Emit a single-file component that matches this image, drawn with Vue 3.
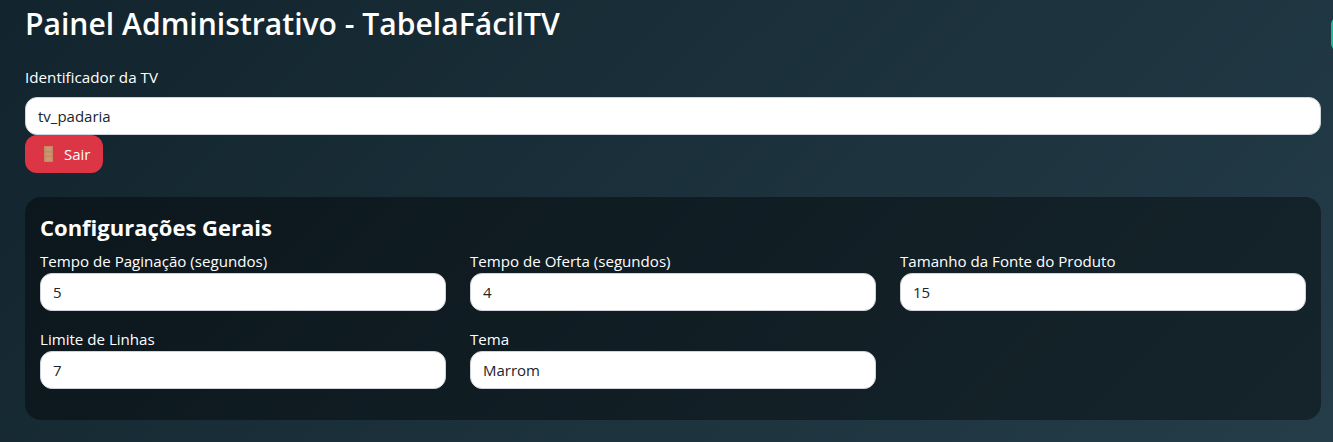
<script setup>
const fields = [
  { label: "Tempo de Paginação (segundos)", value: "5" },
  { label: "Tempo de Oferta (segundos)", value: "4" },
  { label: "Tamanho da Fonte do Produto", value: "15" },
  { label: "Limite de Linhas", value: "7" },
  { label: "Tema", value: "Marrom" },
];
</script>

<template>
  <div class="page">
    <span class="side-tab"></span>

    <h1 class="title">Painel Administrativo - TabelaFácilTV</h1>

    <label class="tv-label" for="tv-id">Identificador da TV</label>
    <input id="tv-id" class="field" type="text" value="tv_padaria" />

    <button class="btn-exit" type="button">
      <svg class="door" viewBox="0 0 9 16" width="9" height="16">
        <rect width="9" height="16" fill="#c58862" />
        <rect x="1.5" y="1" width="6" height="4" fill="#cc9673" />
        <rect x="1.5" y="6.5" width="6" height="3" fill="#cc9673" />
        <rect x="1.5" y="11" width="6" height="4" fill="#cc9673" />
      </svg>
      <span>Sair</span>
    </button>

    <section class="card">
      <h2 class="card-title">Configurações Gerais</h2>
      <div class="grid">
        <div v-for="item in fields" :key="item.label" class="group">
          <label class="group-label">{{ item.label }}</label>
          <input class="field" type="text" :value="item.value" />
        </div>
      </div>
    </section>
  </div>
</template>

<style>
html,
body {
  margin: 0;
  background: #1a2e38;
}
</style>

<style scoped>
.page {
  position: relative;
  box-sizing: border-box;
  height: 442px;
  padding: 0 12px 0 25px;
  overflow: hidden;
  color: #fff;
  font-family: "Open Sans", "Noto Sans", sans-serif;
  background: linear-gradient(135deg, #12242d 0%, #243d49 100%);
}

.side-tab {
  position: absolute;
  top: 18px;
  right: -30px;
  width: 32px;
  height: 32px;
  border-radius: 6px;
  background: #1abc9c;
}

.title {
  margin: 0;
  padding-top: 5px;
  font-size: 30.1px;
  line-height: 38px;
  font-weight: 600;
}

.tv-label {
  display: block;
  margin-top: 23px;
  margin-bottom: 9px;
  font-size: 15.2px;
  line-height: 22px;
}

.field {
  display: block;
  box-sizing: border-box;
  width: 100%;
  height: 38px;
  padding: 0 12px;
  border: 1px solid #ced4da;
  border-radius: 12px;
  background: #fff;
  color: #212529;
  font-family: inherit;
  font-size: 15px;
  outline: none;
}

.btn-exit {
  display: flex;
  align-items: center;
  gap: 11px;
  width: 78px;
  height: 38px;
  padding: 0 0 0 19px;
  border: none;
  border-radius: 12px;
  background: #dc3545;
  color: #fff;
  font-family: inherit;
  font-size: 15px;
}

.door {
  flex-shrink: 0;
}

.card {
  box-sizing: border-box;
  height: 223px;
  margin-top: 24px;
  padding: 14px 15px 15px;
  border-radius: 16px;
  background: rgba(0, 0, 0, 0.4);
}

.card-title {
  margin: 0;
  font-size: 22px;
  line-height: 32px;
  font-weight: 700;
}

.grid {
  display: grid;
  grid-template-columns: repeat(3, 1fr);
  column-gap: 24px;
  row-gap: 18px;
  margin-top: 8px;
}

.group-label {
  display: block;
  margin-bottom: 2px;
  font-size: 15.1px;
  line-height: 20px;
}
</style>
